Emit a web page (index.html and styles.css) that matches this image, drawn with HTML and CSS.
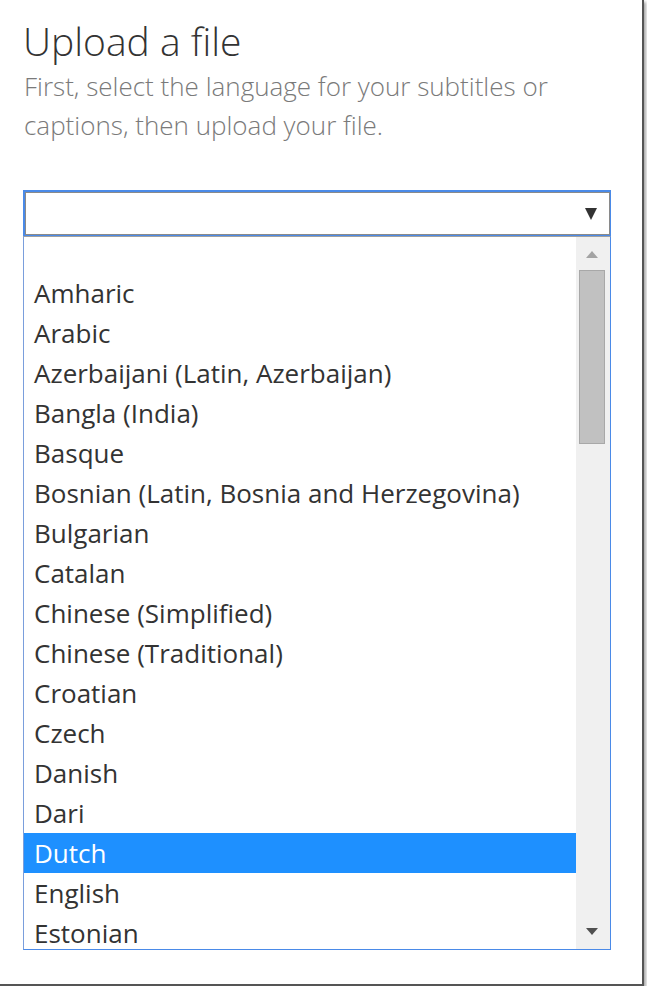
FILE: index.html
```html
<!DOCTYPE html>
<html lang="en">
<head>
<meta charset="utf-8">
<title>Upload a file</title>
<link rel="stylesheet" href="styles.css">
</head>
<body>
<div class="frame">
  <h1 class="title">Upload a file</h1>
  <p class="subtitle">First, select the language for your subtitles or captions, then upload your file.</p>
  <div class="select">
    <span class="select-arrow"></span>
  </div>
  <div class="listbox">
    <ul class="options">
      <li class="option blank"></li>
      <li class="option">Amharic</li>
      <li class="option">Arabic</li>
      <li class="option">Azerbaijani (Latin, Azerbaijan)</li>
      <li class="option">Bangla (India)</li>
      <li class="option">Basque</li>
      <li class="option">Bosnian (Latin, Bosnia and Herzegovina)</li>
      <li class="option">Bulgarian</li>
      <li class="option">Catalan</li>
      <li class="option">Chinese (Simplified)</li>
      <li class="option">Chinese (Traditional)</li>
      <li class="option">Croatian</li>
      <li class="option">Czech</li>
      <li class="option">Danish</li>
      <li class="option">Dari</li>
      <li class="option selected">Dutch</li>
      <li class="option">English</li>
      <li class="option">Estonian</li>
    </ul>
    <div class="scrollbar">
      <span class="sb-up"></span>
      <span class="sb-thumb"></span>
      <span class="sb-track"></span>
      <span class="sb-down"></span>
    </div>
  </div>
</div>
</body>
</html>
```
FILE: styles.css
```css
html, body {
  margin: 0;
  padding: 0;
  background: #ffffff;
}
body {
  font-family: "Open Sans", "Noto Sans", sans-serif;
  color: #333333;
}
.frame {
  width: 644px;
  height: 986px;
  box-sizing: border-box;
  background: #ffffff;
  border-right: 2px solid #555555;
  border-bottom: 2px solid #555555;
  box-shadow: 2px 2px 3px rgba(0, 0, 0, 0.35);
  padding: 0 0 0 24px;
  overflow: hidden;
  display: flex;
  flex-direction: column;
}
.title {
  margin: 18px 0 0 -1px;
  font-size: 39px;
  font-weight: 300;
  line-height: 46px;
  color: #333333;
}
.subtitle {
  margin: 3px 0 0 0;
  width: 580px;
  font-size: 26px;
  font-weight: 300;
  line-height: 39px;
  color: #7a7a7a;
}
.select {
  margin: 45px 0 0 -1px;
  width: 588px;
  height: 46px;
  box-sizing: border-box;
  border: 2px solid #4a8ae8;
  border-right-width: 1px;
  border-bottom-width: 1px;
  box-shadow: inset 1px 1px 0 #8a8a8a, inset -1px -1px 0 #8a8a8a;
  display: flex;
  align-items: center;
  justify-content: flex-end;
  padding-right: 13px;
}
.select-arrow {
  width: 0;
  height: 0;
  border-left: 6px solid transparent;
  border-right: 6px solid transparent;
  border-top: 12px solid #333333;
}
.listbox {
  margin: 0 0 0 -1px;
  width: 588px;
  height: 714px;
  box-sizing: border-box;
  border: 1px solid #4a8ae8;
  border-left-color: #7a9edc;
  border-top-color: #a0a0a0;
  display: flex;
  overflow: hidden;
}
.options {
  list-style: none;
  margin: 0;
  padding: 0;
  flex: 1;
}
.option {
  height: 40px;
  line-height: 40px;
  padding-left: 10px;
  font-size: 26px;
  color: #333333;
  white-space: nowrap;
}
.option.blank {
  height: 36px;
}
.option.selected {
  background: #1e90ff;
  color: #ffffff;
}
.scrollbar {
  width: 34px;
  background: #f0f0f0;
  display: flex;
  flex-direction: column;
  align-items: center;
  padding: 14px 2px 14px 0;
  box-sizing: border-box;
}
.sb-up {
  width: 0;
  height: 0;
  border-left: 6px solid transparent;
  border-right: 6px solid transparent;
  border-bottom: 7px solid #a3a3a3;
}
.sb-thumb {
  margin-top: 12px;
  width: 26px;
  height: 174px;
  box-sizing: border-box;
  background: #c1c1c1;
  border: 1px solid #a8a8a8;
}
.sb-track {
  flex: 1;
}
.sb-down {
  width: 0;
  height: 0;
  border-left: 6px solid transparent;
  border-right: 6px solid transparent;
  border-top: 7px solid #505050;
}
```
